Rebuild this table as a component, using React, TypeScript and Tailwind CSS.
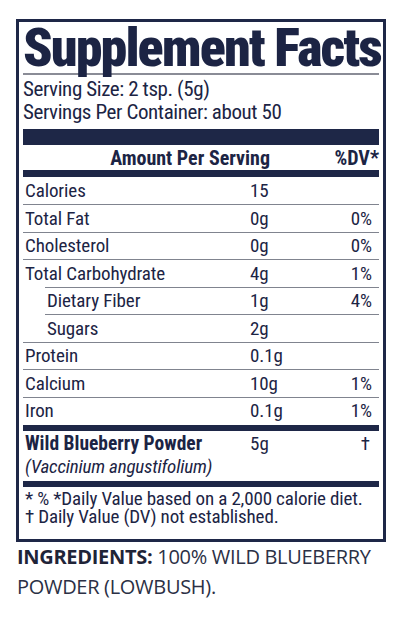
const navy = "text-[#1c2444]"

type Row = {
  name: string
  amount: string
  dv?: string
  indent?: boolean
  lineIndent?: boolean
  line?: boolean
}

const rows: Row[] = [
  { name: "Calories", amount: "15", line: true },
  { name: "Total Fat", amount: "0g", dv: "0%", line: true },
  { name: "Cholesterol", amount: "0g", dv: "0%", line: true },
  { name: "Total Carbohydrate", amount: "4g", dv: "1%", line: true, lineIndent: true },
  { name: "Dietary Fiber", amount: "1g", dv: "4%", indent: true, line: true, lineIndent: true },
  { name: "Sugars", amount: "2g", indent: true, line: true },
  { name: "Protein", amount: "0.1g", line: true },
  { name: "Calcium", amount: "10g", dv: "1%", line: true },
  { name: "Iron", amount: "0.1g", dv: "1%" },
]

function FactRow({ row }: { row: Row }) {
  return (
    <div className="flex flex-col h-[27.5px]">
      <div className="flex flex-1 items-center text-[19px] leading-[27px] tracking-[-0.1px]">
        <div className={row.indent ? "w-[227px] pl-[24px]" : "w-[227px] pl-[2px]"}>{row.name}</div>
        <div className="flex-1">{row.amount}</div>
        <div className="pr-[7px] text-right">{row.dv}</div>
      </div>
      {row.line && (
        <div className={row.lineIndent ? "ml-[22px] h-[2px] bg-[#80848f]" : "h-[2px] bg-[#80848f]"} />
      )}
    </div>
  )
}

export default function App() {
  return (
    <div className="min-h-screen bg-white pt-[19px] pl-[16px]">
      <div
        className={`w-[370px] border-[3px] border-[#1e2747] px-[4px] pb-[12px] ${navy}`}
        style={{ fontFamily: '"Roboto Condensed", Roboto, sans-serif' }}
      >
        <h1 className="pt-[1px] text-[54px] leading-[50px] font-black tracking-[-1.9px] whitespace-nowrap">
          Supplement Facts
        </h1>
        <div className="h-[2px] bg-[#8a8c96]" />

        <div className="mt-[3px] text-[21px] leading-[23px] tracking-[-0.4px]">
          <p>Serving Size: 2 tsp. (5g)</p>
          <p>Servings Per Container: about 50</p>
        </div>

        <div className="mt-[5px] h-[16px] bg-[#1e2747]" />
        <div className="flex h-[25px] items-center text-[20px] font-bold">
          <div className="w-[247px] text-right">Amount Per Serving</div>
          <div className="flex-1 text-right">%DV*</div>
        </div>
        <div className="h-[7px] bg-[#1e2747]" />

        {rows.map((r) => (
          <FactRow key={r.name} row={r} />
        ))}

        <div className="h-[6px] bg-[#1e2747]" />
        <div className="flex pt-[1px] text-[19px] leading-[23px]">
          <div className="w-[227px] pl-[2px]">
            <p className="text-[19.5px] font-bold whitespace-nowrap">Wild Blueberry Powder</p>
            <p className="italic tracking-[-0.2px] whitespace-nowrap">(Vaccinium angustifolium)</p>
          </div>
          <div className="flex-1">5g</div>
          <div className="pr-[9px] text-right">†</div>
        </div>
        <div className="mt-[3px] h-[6px] bg-[#1e2747]" />

        <div className="pt-[3px] pl-[2px] text-[19px] leading-[18.5px] tracking-[-0.15px] whitespace-nowrap">
          <p>* % *Daily Value based on a 2,000 calorie diet.</p>
          <p>† Daily Value (DV) not established.</p>
        </div>
      </div>

      <p
        className="ml-[1px] text-[20px] leading-[30px] tracking-[-0.3px] text-[#2b3045] whitespace-nowrap"
        style={{ fontFamily: '"Open Sans", sans-serif' }}
      >
        <span className="font-bold text-[#1f2438]">INGREDIENTS:</span> 100% WILD BLUEBERRY
        <br />
        POWDER (LOWBUSH).
      </p>
    </div>
  )
}
